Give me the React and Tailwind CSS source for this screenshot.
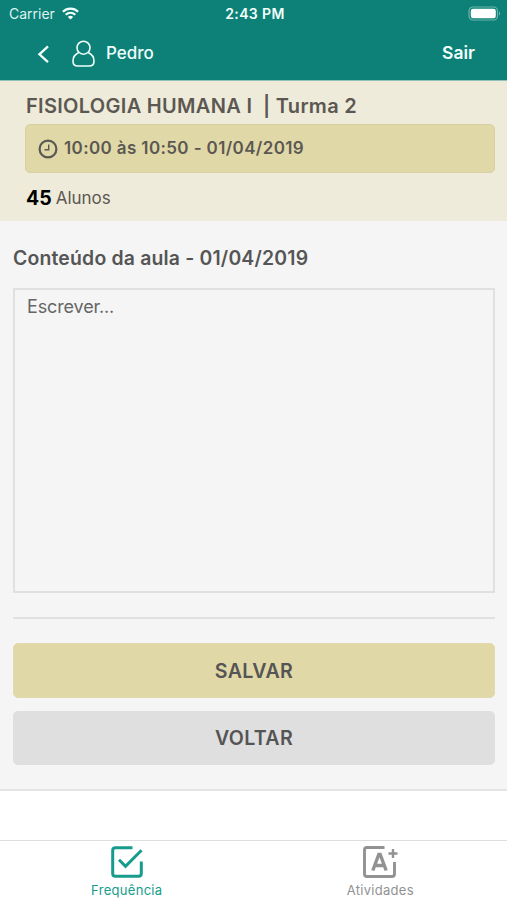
function StatusBar() {
  return (
    <div className="flex h-[27px] items-center justify-between pr-[6px] pl-[9px] text-[14px] text-[#dff3ef]">
      <div className="flex flex-1 items-center gap-[7px]">
        <span className="pt-px leading-none">Carrier</span>
        <svg width="17" height="13" viewBox="0 0 17 13" fill="none" stroke="#f2fffc" strokeWidth="2.2">
          <path d="M.9 4.8C5.2.6 11.8.6 16.1 4.8" />
          <path d="M3.7 7.7c2.8-2.6 6.8-2.6 9.6 0" />
          <path d="M8.5 12.6 5.8 9.9c1.6-1.4 3.8-1.4 5.4 0Z" fill="#f2fffc" stroke="none" />
        </svg>
      </div>
      <span className="pt-px text-[14px] leading-none font-semibold tracking-[0.4px] text-[#f2fffc]">2:43 PM</span>
      <div className="flex flex-1 justify-end">
        <svg width="33" height="15" viewBox="0 0 33 15">
          <rect x="1" y="1" width="28.5" height="13" rx="4" fill="none" stroke="#6db5ac" strokeWidth="1.2" />
          <rect x="2.8" y="2.8" width="25" height="9.4" rx="2.2" fill="#fff" />
          <path d="M31 5.4c1.6.7 1.6 3.5 0 4.2Z" fill="#6db5ac" />
        </svg>
      </div>
    </div>
  );
}

function NavBar() {
  return (
    <div className="flex h-[53px] items-center pr-[32px] pl-[37px] text-[#effffc]">
      <svg width="13" height="20" viewBox="0 0 13 20" fill="none" stroke="currentColor" strokeWidth="2.3">
        <path d="M11 2.4 2.4 10.3l8.6 7.9" />
      </svg>
      <svg className="ml-[22px]" width="23" height="27" viewBox="0 0 23 27" fill="none" stroke="currentColor" strokeWidth="1.6">
        <circle cx="11.5" cy="7.7" r="6.5" />
        <path d="M6.8 12.6C3 14.3 1 17.2 1 21.3 1 24.6 2.6 26 6 26h11c3.400 0 5-1.400 5-4.700 0-4.100-2-7-5.800-8.700" />
      </svg>
      <span className="ml-[11px] text-[17px] leading-none font-medium">Pedro</span>
      <span className="ml-auto pb-px text-[17.5px] leading-none font-semibold">Sair</span>
    </div>
  );
}

function ClassSummary() {
  return (
    <section className="h-[140px] bg-[#efebda] pr-[12px] pl-[25px] text-[#5b5853]">
      <h1 className="flex h-[43px] items-center pt-[6px] pl-px text-[20px] leading-none font-semibold tracking-[0.31px] whitespace-pre">FISIOLOGIA HUMANA I  | Turma 2</h1>
      <div className="flex h-[49px] items-center rounded-[5px] border border-[#d9cfa2] bg-[#e1d8a7] pl-[12px]">
        <svg width="20" height="20" viewBox="0 0 20 20" fill="none" stroke="currentColor">
          <circle cx="10" cy="10" r="8.400" strokeWidth="2.200" />
          <path d="M10.700 5.500v5.300H6.500" strokeWidth="1.400" />
        </svg>
        <span className="ml-[6px] pb-px text-[17px] leading-none font-semibold tracking-[0.38px]">10:00 às 10:50 - 01/04/2019</span>
      </div>
      <p className="flex h-[48px] items-center gap-[4px] pt-[3px] pl-px leading-none">
        <strong className="text-[19.500px] font-bold text-black">45</strong>
        <span className="text-[17px]">Alunos</span>
      </p>
    </section>
  );
}

function LessonForm() {
  return (
    <section className="h-[570px] border-b-2 border-[#e4e4e4] bg-[#f5f5f5] pr-[12px] pl-[13px] text-[#555]">
      <h2 className="flex h-[67px] items-center pt-[8px] text-[19.400px] leading-none font-semibold tracking-[0.19px]">Conteúdo da aula - 01/04/2019</h2>
      <div className="h-[305px] border-2 border-[#e0e0e0] px-[12px] pt-[7px] text-[18px] leading-[20px] tracking-[-0.14px] text-[#666]">Escrever...</div>
      <hr className="mt-[24px] border-t-2 border-[#e1e1e1]" />
      <button className="mt-[24px] flex h-[55px] w-full items-center justify-center rounded-[5px] border border-[#e3d9ae] bg-[#e1d8a7] pt-[2px] text-[19.600px] leading-none font-semibold tracking-[0.35px]">SALVAR</button>
      <button className="mt-[12.500px] flex h-[54.500px] w-full items-center justify-center rounded-[5px] bg-[#dfdfdf] pt-[2px] text-[19.600px] leading-none font-semibold tracking-[0.35px]">VOLTAR</button>
    </section>
  );
}

function TabBar() {
  return (
    <nav className="mt-[49px] grid h-[60px] grid-cols-2 border-t border-[#dedede] bg-white text-[13px] leading-none tracking-[0.3px]">
      <div className="flex flex-col items-center pt-[5px] text-[#159c8c]">
        <svg className="ml-px" width="32" height="32" viewBox="0 0 32 32" fill="none" stroke="currentColor" strokeWidth="3">
          <path d="M21.500 1.700H4.500Q1.700 1.700 1.700 4.500v23q0 2.800 2.800 2.800h23q2.800 0 2.800-2.800V15.500" />
          <path d="m8 13.800 6.500 6.500L30.500 4.300" />
        </svg>
        <span className="mt-[6px]">Frequência</span>
      </div>
      <div className="flex flex-col items-center pt-[5px] text-[#929292]">
        <svg width="36" height="32" viewBox="0 0 36 32" fill="none" stroke="currentColor" strokeWidth="2.900">
          <path d="M22.500 1.500H5Q2.500 1.500 2.500 4v24q0 2.500 2.500 2.500h25q2.500 0 2.500-2.500V16" />
          <path d="m10.800 24.500 6-16h1.400l6 16M13 19.500h9" strokeWidth="3.400" />
          <path d="M31 3v9M26.500 7.500h9" strokeWidth="2.400" />
        </svg>
        <span className="mt-[6px]">Atividades</span>
      </div>
    </nav>
  );
}

export default function App() {
  return (
    <main className="h-[900px] w-[507px] overflow-hidden bg-white font-['Inter','Liberation_Sans',sans-serif]">
      <header className="h-[81px] border-b border-[#8fc1b7] bg-[#0d8177]">
        <StatusBar />
        <NavBar />
      </header>
      <ClassSummary />
      <LessonForm />
      <TabBar />
    </main>
  );
}
